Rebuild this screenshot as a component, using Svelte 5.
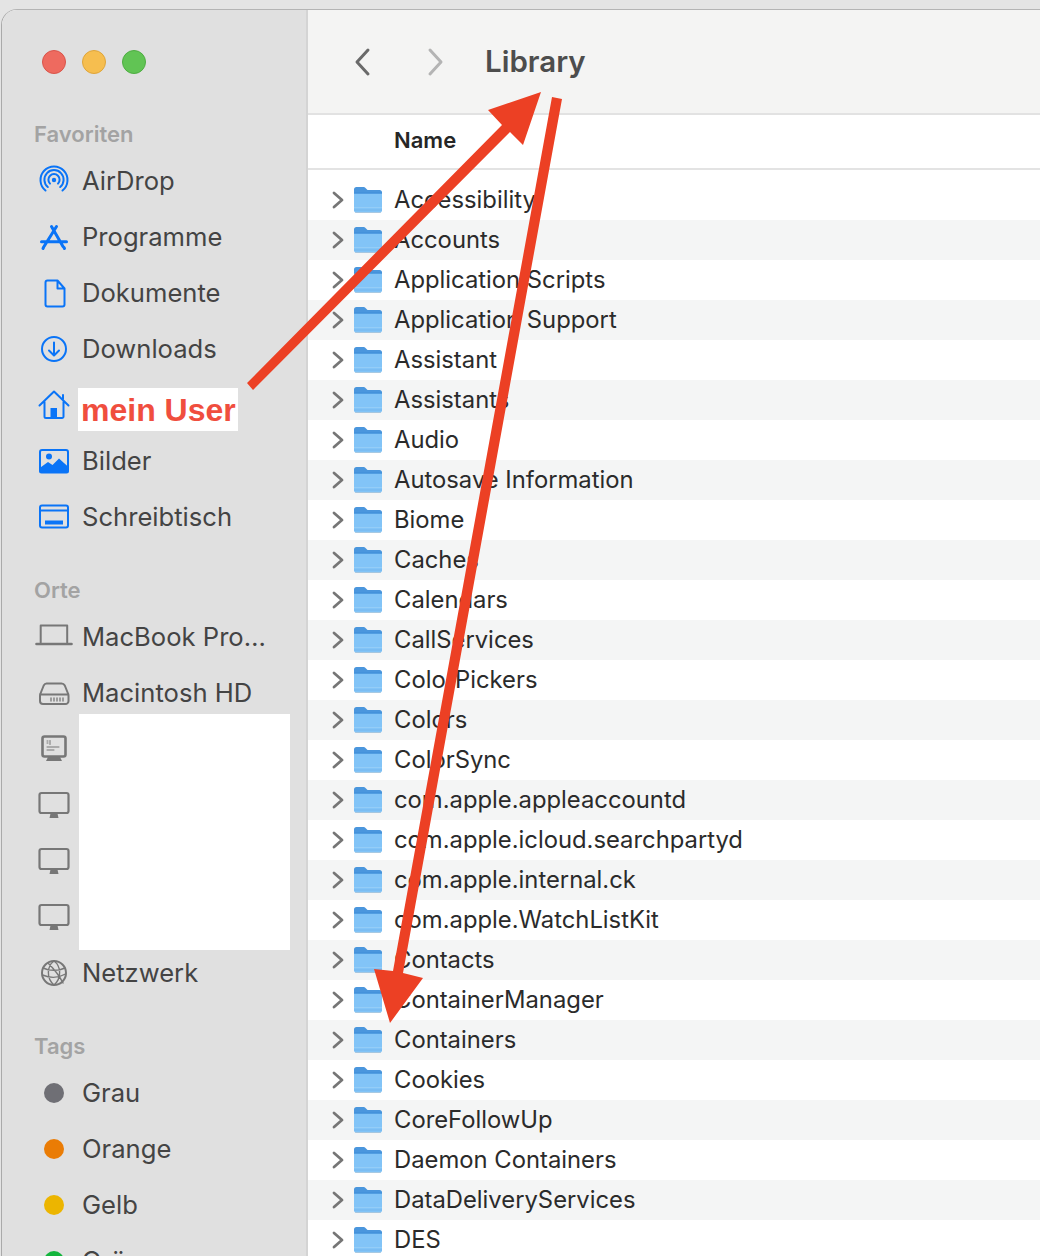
<script>
  // Finder-Fenster mit Anmerkungen (Pfeile, weisse Abdeckungen)
  const favorites = [
    { icon: 'airdrop', label: 'AirDrop' },
    { icon: 'apps', label: 'Programme' },
    { icon: 'doc', label: 'Dokumente' },
    { icon: 'download', label: 'Downloads' },
    { icon: 'home', label: '' },
    { icon: 'photo', label: 'Bilder' },
    { icon: 'desktop', label: 'Schreibtisch' }
  ];
  const places = [
    { icon: 'laptop', label: 'MacBook Pro…' },
    { icon: 'disk', label: 'Macintosh HD' },
    { icon: 'server', label: '' },
    { icon: 'monitor', label: '' },
    { icon: 'monitor', label: '' },
    { icon: 'monitor', label: '' },
    { icon: 'globe', label: 'Netzwerk' }
  ];
  const tags = [
    { color: '#6f6f75', label: 'Grau' },
    { color: '#ea7c05', label: 'Orange' },
    { color: '#ecb500', label: 'Gelb' },
    { color: '#13b53c', label: 'Grün' }
  ];
  const folders = [
    'Accessibility', 'Accounts', 'Application Scripts', 'Application Support', 'Assistant',
    'Assistants', 'Audio', 'Autosave Information', 'Biome', 'Caches', 'Calendars',
    'CallServices', 'ColorPickers', 'Colors', 'ColorSync', 'com.apple.appleaccountd',
    'com.apple.icloud.searchpartyd', 'com.apple.internal.ck', 'com.apple.WatchListKit',
    'Contacts', 'ContainerManager', 'Containers', 'Cookies', 'CoreFollowUp',
    'Daemon Containers', 'DataDeliveryServices', 'DES'
  ];
</script>

{#snippet icon(name)}
  <svg class="icon" class:blue={['airdrop','apps','doc','download','home','photo','desktop'].includes(name)} viewBox="0 0 40 40" aria-hidden="true">
    {#if name === 'airdrop'}
      <path d="M11.500 29.500a13.500 13.500 0 1 1 17 0" />
      <path d="M13.800 26a9.600 9.600 0 1 1 12.400 0" />
      <path d="M16 22.600a5.600 5.600 0 1 1 8 0" />
      <circle class="fill" cx="20" cy="19" r="2.200" />
    {:else if name === 'apps'}
      <path stroke-width="3" d="M17.500 9.500l11.500 20M22.500 9.500l-12.500 20M7.500 24.700h25" />
      <path stroke-width="3" d="M9.500 30.500l-.5 1M30 30.500l.5 1" />
    {:else if name === 'doc'}
      <path d="M11.500 9.500a2 2 0 0 1 2-2h10l7 8v16a2 2 0 0 1-2 2h-15a2 2 0 0 1-2-2zM23.500 7.500v8h7" />
    {:else if name === 'download'}
      <circle cx="20" cy="20" r="12" />
      <path d="M20 13.500v12.500M15 21.500l5 5 5-5" />
    {:else if name === 'home'}
      <path d="M5.500 20.500L20 6.500l14.500 14M10.500 17v14.500a1.500 1.500 0 0 0 1.500 1.500h16a1.500 1.500 0 0 0 1.500-1.500V17M29 10v4" />
      <rect class="fill" x="16.500" y="23" width="6.500" height="10" />
    {:else if name === 'photo'}
      <rect x="6" y="9" width="28" height="21.500" rx="2" />
      <circle class="fill" cx="15" cy="15.500" r="3" />
      <path class="fill" d="M5 27.500l9-6.500 4.500 3 6.500-6.500 10 9V30a2.500 2.500 0 0 1-2.500 2.500h-25A2.500 2.500 0 0 1 5 30z" />
    {:else if name === 'desktop'}
      <rect x="6" y="8.500" width="28" height="22" rx="2" />
      <path d="M6 13.500h28" />
      <rect class="fill" x="11" y="23.500" width="18" height="4" />
    {:else if name === 'laptop'}
      <path d="M6.700 25.500v-17h26.500v17" />
      <path stroke-width="2.600" d="M2.500 27h35" />
    {:else if name === 'disk'}
      <path d="M12.500 10.500h15c1.500 0 2.500.5 3.300 2l3.200 8c.5 1 .5 1.500.5 2.500v5a3 3 0 0 1-3 3H9a3 3 0 0 1-3-3v-5c0-1 0-1.500.5-2.500l3.200-8c.8-1.500 1.800-2 2.800-2zM7 21.500h26" />
      <path stroke-width="1.300" d="M17 25v3M20 25v3M23 25v3M26 25v3M29 25v3" />
    {:else if name === 'server'}
      <rect stroke-width="2.600" x="8.500" y="7.500" width="23" height="20" rx="2" />
      <path stroke-width="1" d="M13 12h1M13 14h1M16 11.500v4M13 18h12M13 21h7" />
      <path class="fill" d="M14 28h12l2 4H12z" />
    {:else if name === 'monitor'}
      <rect stroke-width="2.200" x="5.500" y="8" width="29" height="20" rx="2" />
      <path class="fill" d="M16.500 28.500h7l1 4.500h-9z" />
    {:else if name === 'globe'}
      <circle cx="20" cy="20" r="12" />
      <path stroke-width="1.400" d="M20 8c-7 5-8 17 0 24M20 8c7 5 8 17 0 24M9 15c6 3 16 3 22 0M8.500 22c7 3 16 3 23-1M14 10c5 5 12 14 15 20" />
    {/if}
  </svg>
{/snippet}

{#snippet navItem(item)}
  <li class="nav-item">
    <span class="icon-slot">{@render icon(item.icon)}</span>
    <span>{item.label}</span>
  </li>
{/snippet}

<div class="page">
  <div class="window">
    <aside class="sidebar">
      <div class="lights">
        <span class="light red"></span>
        <span class="light yellow"></span>
        <span class="light green"></span>
      </div>

      <h3>Favoriten</h3>
      <ul>
        {#each favorites as item}{@render navItem(item)}{/each}
      </ul>

      <h3>Orte</h3>
      <ul>
        {#each places as item}{@render navItem(item)}{/each}
      </ul>

      <h3>Tags</h3>
      <ul>
        {#each tags as tag}
          <li class="nav-item">
            <span class="icon-slot"><span class="dot" style="background: {tag.color}"></span></span>
            <span>{tag.label}</span>
          </li>
        {/each}
      </ul>
    </aside>

    <main class="content">
      <header class="toolbar">
        <svg class="nav-arrow" viewBox="0 0 20 30" aria-hidden="true"><path d="M15 3L4 15l11 12" /></svg>
        <svg class="nav-arrow off" viewBox="0 0 20 30" aria-hidden="true"><path d="M5 3l11 12L5 27" /></svg>
        <h1>Library</h1>
      </header>

      <div class="col-head">Name</div>

      <div class="list">
        {#each folders as name}
          <div class="row">
            <svg class="chevron" viewBox="0 0 12 18" aria-hidden="true"><path d="M2 2l8 7-8 7" /></svg>
            <svg class="folder" viewBox="0 0 28 26" aria-hidden="true">
              <path fill="#4a96dd" d="M0 2.500A2.500 2.500 0 0 1 2.500 0h6.800c1 0 1.500.4 2.200 1l2 2h12A2.500 2.500 0 0 1 28 5.500V12H0z" />
              <path fill="#82c4f7" d="M0 6.500h28v17a2 2 0 0 1-2 2H2a2 2 0 0 1-2-2z" />
              <path fill="#3f8ed9" d="M0 5.500h28v1H0z" />
              <path fill="#94cdf7" d="M0 20h28v1H0z" />
              <path fill="#74b6ec" d="M0 22.500h28v1H0z" />
              <path fill="#8fb0c9" d="M1 25.500h26v.5H1z" />
            </svg>
            <span>{name}</span>
          </div>
        {/each}
      </div>
    </main>
  </div>

  <!-- Anmerkungen, liegen ueber dem Fenster -->
  <div class="note-user">mein User</div>
  <div class="note-cover"></div>
  <svg class="arrows" viewBox="0 0 1040 1256" aria-hidden="true">
    <polygon points="247,383 253,390 510,132 523,145 541,92 488,110 502,125" />
    <polygon points="552,97 562,99 403,973 423,978 390,1023 374,969 393,971" />
  </svg>
</div>

<style>
  :global(body) {
    margin: 0;
  }
  .page {
    position: relative;
    width: 1040px;
    height: 1256px;
    overflow: hidden;
    box-sizing: border-box;
    padding: 9px 0 0 1px;
    background: #e4e4e4;
    font-family: Inter, "Liberation Sans", sans-serif;
    color: #444;
  }
  .window {
    display: flex;
    height: 1300px;
    box-sizing: border-box;
    border-top: 1px solid #b4b4b4;
    border-left: 1px solid #aaa;
    border-top-left-radius: 16px;
    overflow: hidden;
    background: #fff;
  }
  .sidebar {
    flex: none;
    width: 304px;
    background: #e0e0e0;
    border-right: 2px solid #d4d4d4;
  }
  .lights {
    display: flex;
    gap: 16px;
    padding: 40px 0 0 40px;
  }
  .light {
    width: 24px;
    height: 24px;
    box-sizing: border-box;
    border-radius: 50%;
    border: 1px solid;
  }
  .red {
    background: #ee6a5f;
    border-color: #d9544a;
  }
  .yellow {
    background: #f6be4f;
    border-color: #dfa53a;
  }
  .green {
    background: #61c454;
    border-color: #4ead42;
  }
  h3 {
    margin: 31px 0 5px;
    padding-left: 32px;
    font-size: 22px;
    line-height: 28px;
    font-weight: 600;
    color: #a3a3a3;
  }
  .lights + h3 {
    margin-top: 46px;
  }
  ul {
    margin: 0;
    padding: 0;
    list-style: none;
  }
  .nav-item {
    display: flex;
    align-items: center;
    height: 56px;
    padding-left: 32px;
    font-size: 25.6px;
    line-height: 30px;
    color: #444;
  }
  .icon-slot {
    display: flex;
    flex: none;
    align-items: center;
    justify-content: center;
    width: 40px;
    height: 40px;
    margin-right: 8px;
  }
  .icon {
    width: 40px;
    height: 40px;
    fill: none;
    stroke: #777;
    stroke-width: 2;
    stroke-linecap: round;
    stroke-linejoin: round;
  }
  .icon.blue {
    stroke: #0a74f7;
  }
  .icon .fill {
    fill: #777;
    stroke: none;
  }
  .icon.blue .fill {
    fill: #0a74f7;
  }
  .dot {
    width: 20px;
    height: 20px;
    border-radius: 50%;
  }
  .content {
    flex: 1;
    min-width: 0;
  }
  .toolbar {
    display: flex;
    align-items: center;
    box-sizing: border-box;
    height: 105px;
    padding: 0 0 0 45px;
    background: #f4f4f3;
    border-bottom: 2px solid #e2e2e2;
  }
  .nav-arrow {
    width: 20px;
    height: 30px;
    margin-right: 52px;
    fill: none;
    stroke: #6a6a6a;
    stroke-width: 3;
    stroke-linecap: round;
    stroke-linejoin: round;
  }
  .nav-arrow.off {
    margin-right: 40px;
    stroke: #b4b4b4;
  }
  h1 {
    margin: -2px 0 0;
    font-size: 29.5px;
    font-weight: 600;
    color: #4d4d4d;
  }
  .col-head {
    box-sizing: border-box;
    height: 55px;
    padding: 10px 0 0 86px;
    font-size: 22px;
    line-height: 30px;
    font-weight: 600;
    color: #262626;
    border-bottom: 2px solid #e3e3e3;
  }
  .list {
    padding-top: 10px;
  }
  .row {
    display: flex;
    align-items: center;
    height: 40px;
    padding-left: 24px;
    font-size: 23.8px;
    line-height: 30px;
    color: #2b2b2b;
  }
  .row:nth-child(even) {
    background: #f4f5f5;
  }
  .chevron {
    flex: none;
    width: 12px;
    height: 18px;
    margin-right: 10px;
    fill: none;
    stroke: #767676;
    stroke-width: 2.800;
    stroke-linecap: round;
    stroke-linejoin: round;
  }
  .folder {
    flex: none;
    width: 28px;
    height: 26px;
    margin-right: 12px;
  }
  .note-user {
    position: absolute;
    left: 78px;
    top: 388px;
    box-sizing: border-box;
    width: 160px;
    height: 43px;
    padding-left: 3px;
    background: #fff;
    font: 700 32px/45px "Liberation Sans", Arial, sans-serif;
    color: #f04e3e;
    white-space: nowrap;
  }
  .note-cover {
    position: absolute;
    left: 79px;
    top: 714px;
    width: 211px;
    height: 236px;
    background: #fff;
  }
  .arrows {
    position: absolute;
    inset: 0;
    width: 1040px;
    height: 1256px;
    fill: #ec4024;
    pointer-events: none;
  }
</style>
